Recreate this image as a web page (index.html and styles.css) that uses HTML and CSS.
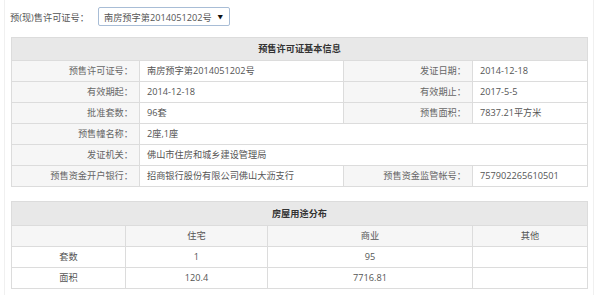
FILE: index.html
```html
<!DOCTYPE html>
<html lang="zh-CN">
<head>
<meta charset="utf-8">
<link rel="stylesheet" href="styles.css">
</head>
<body>
<div class="frame">
  <div class="picker">
    <span class="picker-label">预(现)售许可证号：</span>
    <span class="select"><span class="select-text">南房预字第2014051202号</span><span class="arrow">▼</span></span>
  </div>

  <table class="grid info">
    <colgroup><col class="c1"><col class="c2"><col class="c3"><col class="c4"></colgroup>
    <tr><th colspan="4" class="head">预售许可证基本信息</th></tr>
    <tr><td class="lab">预售许可证号：</td><td class="val">南房预字第2014051202号</td><td class="lab">发证日期：</td><td class="val">2014-12-18</td></tr>
    <tr><td class="lab">有效期起：</td><td class="val">2014-12-18</td><td class="lab">有效期止：</td><td class="val">2017-5-5</td></tr>
    <tr><td class="lab">批准套数：</td><td class="val">96套</td><td class="lab">预售面积：</td><td class="val">7837.21平方米</td></tr>
    <tr><td class="lab">预售幢名称：</td><td class="val" colspan="3">2座,1座</td></tr>
    <tr><td class="lab">发证机关：</td><td class="val" colspan="3">佛山市住房和城乡建设管理局</td></tr>
    <tr><td class="lab">预售资金开户银行：</td><td class="val">招商银行股份有限公司佛山大沥支行</td><td class="lab">预售资金监管帐号：</td><td class="val">757902265610501</td></tr>
  </table>

  <table class="grid usage">
    <colgroup><col class="d1"><col class="d2"><col class="d3"><col class="d4"></colgroup>
    <tr><th colspan="4" class="head head2">房屋用途分布</th></tr>
    <tr class="sub"><td></td><td>住宅</td><td>商业</td><td>其他</td></tr>
    <tr><td>套数</td><td>1</td><td>95</td><td></td></tr>
    <tr><td>面积</td><td>120.4</td><td>7716.81</td><td></td></tr>
  </table>
</div>
</body>
</html>
```

FILE: styles.css
```css
html, body {
  margin: 0;
  padding: 0;
  background: #fff;
}
body {
  font-family: "Open Sans", "Noto Sans CJK SC", sans-serif;
  font-size: 9.2px;
  color: #555;
}
.frame {
  margin-left: 4px;
  width: 590px;
  min-height: 300px;
  border-left: 1px solid #f0f0f0;
  border-right: 1px solid #f0f0f0;
  padding: 7px 6px 0 6px;
  box-sizing: border-box;
}
.picker {
  display: flex;
  align-items: center;
  height: 19px;
  margin-left: -1px;
}
.picker-label {
  color: #555;
  width: 88px;
}
.select {
  display: flex;
  align-items: center;
  justify-content: space-between;
  width: 132px;
  height: 19px;
  box-sizing: border-box;
  border: 1px solid #a8bdd6;
  border-radius: 2px;
  padding: 0 6px 0 5px;
  color: #555;
}
.arrow {
  font-size: 5.5px;
  color: #111;
}
.grid {
  border-collapse: collapse;
  table-layout: fixed;
  width: 576px;
  margin-top: 11px;
}
.grid td, .grid th {
  border: 1px solid #dcdcdc;
  padding: 0;
  line-height: 20px;
  height: 20px;
  white-space: nowrap;
  overflow: hidden;
}
.grid .head {
  background: #e8e8e8;
  color: #333;
  font-weight: bold;
  line-height: 22px;
  height: 22px;
  text-align: center;
}
.c1 { width: 128px; }
.c2 { width: 204px; }
.c3 { width: 129px; }
.c4 { width: 115px; }
.lab {
  background: #f6f6f6;
  color: #666;
  text-align: right;
  padding-right: 6px !important;
}
.val {
  padding-left: 7px !important;
  color: #555;
}
.usage {
  margin-top: 14px;
}
.grid .head2 {
  line-height: 23px;
  height: 23px;
}
.d1 { width: 114px; }
.d2 { width: 142px; }
.d3 { width: 205px; }
.d4 { width: 115px; }
.usage td {
  text-align: center;
  color: #555;
}
.usage .sub td {
  background: #f6f6f6;
}
```
